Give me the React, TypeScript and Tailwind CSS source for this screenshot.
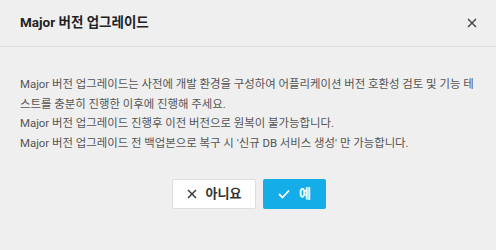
import React from "react";

export default function App() {
  const font = { fontFamily: "Roboto, 'Noto Sans CJK KR', sans-serif" };
  return (
    <div className="w-[496px] h-[250px] bg-[#efefef] flex flex-col" style={font}>
      <div className="h-[47px] flex items-center justify-between pl-5 pr-[19px] border-b border-[#dcdcdc]">
        <div className="text-[13.5px] font-bold text-[#222] leading-none">Major 버전 업그레이드</div>
        <svg width="10" height="10" viewBox="0 0 10 10" className="text-[#444]">
          <path d="M1 1 L9 9 M9 1 L1 9" stroke="currentColor" strokeWidth="1.4" />
        </svg>
      </div>
      <div className="pt-[28px] px-5 text-[11.4px] leading-[19.5px] text-[#555] whitespace-nowrap">
        <div>Major 버전 업그레이드는 사전에 개발 환경을 구성하여 어플리케이션 버전 호환성 검토 및 기능 테</div>
        <div>스트를 충분히 진행한 이후에 진행해 주세요.</div>
        <div>Major 버전 업그레이드 진행후 이전 버전으로 원복이 불가능합니다.</div>
        <div>Major 버전 업그레이드 전 백업본으로 복구 시 '신규 DB 서비스 생성' 만 가능합니다.</div>
      </div>
      <div className="mt-[26px] flex justify-center gap-[7px] pl-[2px]">
        <button className="w-[84px] h-[30px] bg-white border border-[#dedede] rounded-[2px] flex items-center justify-center gap-[9px] text-[13px] font-bold text-[#333]">
          <svg width="10" height="10" viewBox="0 0 10 10">
            <path d="M1 1 L9 9 M9 1 L1 9" stroke="#333" strokeWidth="1.4" />
          </svg>
          <span>아니요</span>
        </button>
        <button className="w-[63px] h-[30px] bg-[#14ade8] rounded-[2px] flex items-center justify-center gap-[9px] text-[13px] font-bold text-white">
          <svg width="12" height="10" viewBox="0 0 12 10">
            <path d="M1 5 L4.5 8.5 L11 1.5" stroke="white" strokeWidth="1.8" fill="none" />
          </svg>
          <span>예</span>
        </button>
      </div>
    </div>
  );
}
